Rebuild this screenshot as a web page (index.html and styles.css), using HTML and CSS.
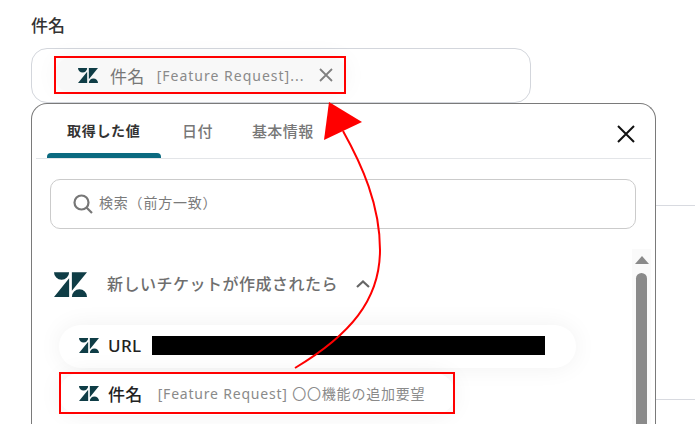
FILE: index.html
```html
<!DOCTYPE html>
<html lang="ja">
<head>
<meta charset="utf-8">
<title>件名</title>
<link rel="stylesheet" href="styles.css">
</head>
<body>
<svg width="0" height="0" class="defs"><defs>
<symbol id="zd" viewBox="0 0 24 18"><path d="M0 0h11a5.500 5.500 0 0 1-11 0zM13 0h11L13 13.500zM11 4.500V18H0zM13 18a5.500 5.500 0 0 1 11 0z"/></symbol>
</defs></svg>
<main class="page">
  <h1 class="title">件名</h1>
  <div class="field">
    <div class="chip">
      <svg class="zd-small"><use href="#zd"/></svg>
      <span class="chip-name">件名</span>
      <span class="chip-value">[Feature Request]...</span>
      <svg class="chip-x" viewBox="0 0 14 14"><path d="M1 1l12 12M13 1L1 13"/></svg>
    </div>
  </div>
  <section class="panel">
    <div class="tabs">
      <div class="tab active">取得した値</div>
      <div class="tab">日付</div>
      <div class="tab">基本情報</div>
      <svg class="close" viewBox="0 0 18 18"><path d="M1 1l16 16M17 1L1 17"/></svg>
    </div>
    <div class="body">
      <div class="search">
        <svg class="lens" viewBox="0 0 20 20"><circle cx="8.500" cy="8.500" r="7"/><path d="M13.500 13.500L19 19"/></svg>
        <span>検索（前方一致）</span>
      </div>
      <div class="group">
        <svg class="zd-large"><use href="#zd"/></svg>
        <span class="group-name">新しいチケットが作成されたら</span>
        <svg class="chevron" viewBox="0 0 14 8"><path d="M1 7l6-5.500L13 7"/></svg>
      </div>
      <div class="row row-url">
        <svg class="zd-small"><use href="#zd"/></svg>
        <span class="row-name">URL</span>
        <span class="redacted"></span>
      </div>
      <div class="row row-subject">
        <svg class="zd-small"><use href="#zd"/></svg>
        <span class="row-name">件名</span>
        <span class="row-value">[Feature Request] 〇〇機能の追加要望</span>
      </div>
    </div>
    <div class="scrollbar">
      <span class="scroll-up"></span>
      <span class="scroll-thumb"></span>
    </div>
  </section>
  <div class="side-line side-line-a"></div>
  <div class="side-line side-line-b"></div>
</main>
<div class="mark mark-chip"></div>
<div class="mark mark-row"></div>
<svg class="arrow" viewBox="0 0 695 424">
  <path class="arrow-line" d="M295 368C350 335 380 300 380 250C380 205 362 165 343 131"/>
  <path class="arrow-head" d="M329 102L362 122L324 140z"/>
</svg>
</body>
</html>
```
FILE: styles.css
```css
* { box-sizing: border-box; }
html, body { margin: 0; height: 100%; }
body {
  position: relative;
  width: 695px;
  height: 424px;
  overflow: hidden;
  background: #fff;
  font-family: "Noto Sans", "Noto Sans CJK JP", sans-serif;
  letter-spacing: .05em;
  color: #333;
}
.defs { position: absolute; }
.page { padding: 15px 0 0 31px; }
.title {
  margin: 0 0 12px;
  font-size: 17px;
  line-height: 21px;
  font-weight: 500;
  letter-spacing: 0;
  color: #333;
}
.field {
  width: 500px;
  height: 55px;
  border: 1px solid #d3d6dc;
  border-radius: 16px;
  padding: 9px 0 0 24px;
}
.chip {
  width: 290px;
  height: 34px;
  border-radius: 14px;
  background: #f8f8f8;
  box-shadow: 0 0 24px rgba(0,0,0,.05);
  display: flex;
  align-items: center;
  padding: 0 13px 0 22px;
}
.zd-small { width: 20px; height: 15px; fill: #0f3d46; flex: none; }
.chip-name { margin-left: 12px; font-size: 17px; letter-spacing: .02em; color: #777; }
.chip-value { margin-left: 12px; font-size: 14px; letter-spacing: 1px; color: #8a8a8a; white-space: nowrap; }
.chip-x { width: 14px; height: 14px; margin-left: auto; fill: none; stroke: #808080; stroke-width: 1.800; flex: none; }
.panel {
  position: relative;
  width: 625px;
  height: 321px;
  border: 1px solid #7a7a7a;
  border-bottom: 0;
  border-radius: 16px 16px 0 0;
  background: #fff;
}
.tabs {
  display: flex;
  align-items: flex-start;
  height: 55px;
  margin: 0 4px;
  border-bottom: 1px solid #e3e5e8;
  padding-left: 11px;
  position: relative;
}
.tab {
  height: 54px;
  padding: 17px 19px 0 20px;
  font-size: 15px;
  line-height: 20px;
  font-weight: 500;
  color: #777;
  letter-spacing: .03em;
}
.tab.active { width: 114px; margin-right: 1px; padding-left: 20px; font-size: 14px; letter-spacing: .05em; color: #333; font-weight: 700; position: relative; }
.tab.active::after {
  content: "";
  position: absolute;
  left: 0; right: 0; bottom: 0;
  height: 5px;
  background: #0b6a80;
  border-radius: 4px 4px 0 0;
}
.close { position: absolute; right: 16px; top: 21px; width: 18px; height: 18px; fill: none; stroke: #111; stroke-width: 2; }
.body { padding: 20px 19px 0 18px; }
.search {
  height: 50px;
  border: 1px solid #cbcbcb;
  border-radius: 10px;
  display: flex;
  align-items: center;
  padding-left: 22px;
  font-size: 14px;
  color: #7a7a7a;
}
.search span { margin-left: 6px; line-height: 20px; margin-top: -3px; }
.lens { width: 20px; height: 20px; fill: none; stroke: #777; stroke-width: 2.200; }
.group { display: flex; align-items: center; height: 32px; margin: 39px 0 0 4px; }
.zd-large { width: 33px; height: 25px; fill: #0f3d46; flex: none; }
.group-name { margin: -2px 0 0 20px; font-size: 16px; font-weight: 500; letter-spacing: .5px; color: #6e6e6e; white-space: nowrap; }
.chevron { width: 14px; height: 8px; margin-left: 18px; fill: none; stroke: #666; stroke-width: 2.200; }
.row {
  display: flex;
  align-items: center;
  height: 43px;
  margin-left: 9px;
  padding: 0 0 2px 20px;
  border-radius: 22px;
  background: #fff;
  box-shadow: 0 0 24px rgba(0,0,0,.06);
}
.row-url { width: 517px; margin-top: 25px; }
.row-subject { width: 396px; margin-top: 5px; height: 42px; }
.row-name { margin-left: 9px; font-size: 17px; font-weight: 500; letter-spacing: .02em; color: #222; }
.redacted { width: 393px; height: 19px; margin-left: 11px; background: #000; }
.row-value { margin-left: 15px; font-size: 14px; color: #8a8a8a; white-space: nowrap; }
.scrollbar {
  position: absolute;
  left: 600px;
  top: 145px;
  width: 19px;
  bottom: 0;
  background: #fafafa;
  display: flex;
  flex-direction: column;
  align-items: center;
}
.scroll-up {
  margin-top: 7px;
  border-left: 7px solid transparent;
  border-right: 7px solid transparent;
  border-bottom: 8px solid #8a8a8a;
}
.scroll-thumb { width: 11px; flex: 1; margin-top: 9px; background: #8a8a8a; border-radius: 6px 6px 0 0; }
.side-line { position: absolute; left: 656px; width: 39px; height: 1px; background: #d8dae0; }
.side-line-a { top: 205px; }
.side-line-b { top: 399px; }
.mark { position: absolute; border: 2px solid #f00; }
.mark-chip { left: 54px; top: 56px; width: 292px; height: 38px; }
.mark-row { left: 59px; top: 372px; width: 396px; height: 42px; }
.arrow { position: absolute; left: 0; top: 0; width: 695px; height: 424px; }
.arrow-line { fill: none; stroke: #f00; stroke-width: 2; }
.arrow-head { fill: #f00; }
```
